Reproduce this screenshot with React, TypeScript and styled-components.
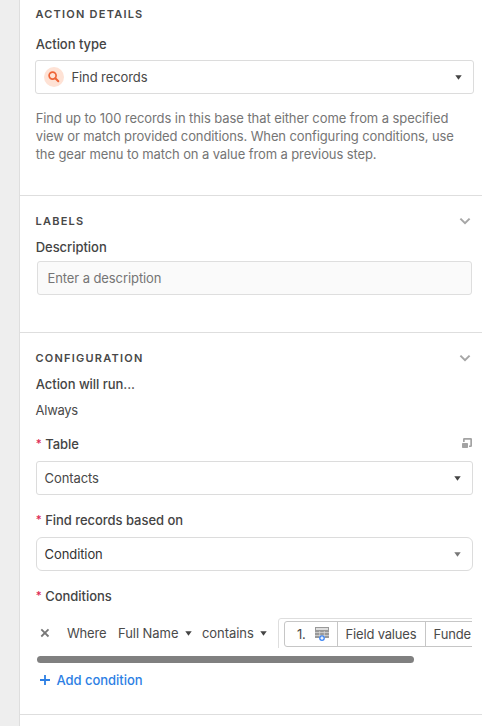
import React from "react";
import styled, { createGlobalStyle } from "styled-components";

const GlobalStyle = createGlobalStyle`
  *, *::before, *::after { box-sizing: border-box; }
  html, body { margin: 0; padding: 0; background: #fff; overflow: hidden; }
  body, input, button {
    font-family: Inter, "Liberation Sans", sans-serif;
    font-size: 13px;
    color: #4a4a4a;
  }
`;

const Page = styled.div`
  display: flex;
  width: 482px;
  height: 726px;
  overflow: hidden;
`;

const Gutter = styled.div`
  flex: none;
  width: 20px;
  background: #eee;
  border-right: 1px solid #dedede;
`;

const Panel = styled.main`
  flex: 1;
  min-width: 0;
  background: #fff;
`;

const Section = styled.section<{ $height: number; $top: number }>`
  height: ${(p) => p.$height}px;
  padding: ${(p) => p.$top}px 8px 0 16px;
  border-bottom: 1px solid #dedede;
`;

const SectionHead = styled.header`
  display: flex;
  align-items: center;
  justify-content: space-between;
  height: 16px;
  padding-right: 3px;
`;

const Title = styled.h2`
  margin: 0 0 0 -0.5px;
  font-size: 11px;
  line-height: 16px;
  font-weight: 600;
  letter-spacing: 1.22px;
  text-transform: uppercase;
  color: #484848;
`;

const LabelRow = styled.div<{ $mt: number }>`
  display: flex;
  align-items: center;
  justify-content: space-between;
  height: 18px;
  margin-top: ${(p) => p.$mt}px;
  padding-right: 2px;
`;

const Label = styled.span`
  display: flex;
  margin-left: -0.3px;
  font-weight: 500;
  line-height: 18px;
  letter-spacing: -0.04px;
  color: #444;
`;

const Required = styled.span`
  width: 9.5px;
  font-size: 11.5px;
  color: #dc2450;
`;

const SelectBox = styled.button<{ $mt: number; $wide?: boolean; $round?: boolean }>`
  display: flex;
  align-items: center;
  width: ${(p) => (p.$wide ? 439 : 437)}px;
  height: 34px;
  margin: ${(p) => p.$mt}px 0 0 ${(p) => (p.$wide ? -1 : 0)}px;
  padding: 0 11px 0 ${(p) => (p.$wide ? 8 : 7.6)}px;
  border: 1px solid #dcdcdc;
  border-radius: ${(p) => (p.$round ? 6 : 3)}px;
  background: #fff;
  text-align: left;
  line-height: 18px;
`;

const SelectValue = styled.span<{ $dark?: boolean }>`
  flex: 1;
  letter-spacing: -0.1px;
  color: ${(p) => (p.$dark ? "#333" : "#484848")};
`;

const IconBadge = styled.span`
  display: flex;
  align-items: center;
  justify-content: center;
  width: 20px;
  height: 20px;
  margin-right: 7.5px;
  border-radius: 50%;
  background: #fee2d5;
`;

const Help = styled.p`
  margin: 15px 0 0 -0.3px;
  line-height: 18px;
  color: #757575;
  white-space: nowrap;
`;

const Line = styled.span<{ $spacing: number }>`
  display: block;
  letter-spacing: ${(p) => p.$spacing}px;
`;

const DescriptionInput = styled.input`
  display: block;
  width: 435px;
  height: 34px;
  margin: 5px 0 0 1px;
  padding: 0 9.5px;
  border: 1px solid #dedede;
  border-radius: 3px;
  background: #fafafa;
  outline: none;
  &::placeholder { color: #757575; opacity: 1; letter-spacing: -0.09px; }
`;

const Value = styled.div`
  height: 18px;
  margin: 8px 0 0 -0.4px;
  line-height: 18px;
  letter-spacing: -0.3px;
`;

const Scroller = styled.div`
  display: flex;
  align-items: flex-start;
  width: 436px;
  height: 30px;
  margin-top: 13px;
  overflow: hidden;
  white-space: nowrap;
  line-height: 30px;
`;

const RemoveButton = styled.span`
  display: flex;
  align-items: center;
  flex: none;
  width: 31px;
  height: 30px;
  padding-left: 4px;
`;

const Word = styled.span<{ $width: number }>`
  flex: none;
  width: ${(p) => p.$width}px;
  letter-spacing: -0.2px;
`;

const Picker = styled.span<{ $width: number }>`
  display: flex;
  align-items: center;
  flex: none;
  width: ${(p) => p.$width}px;
  height: 30px;
  gap: 6.5px;
  letter-spacing: -0.06px;
`;

const ValueBox = styled.div`
  flex: none;
  width: 240px;
  height: 36px;
  padding: 2px 0 0 5px;
  border: 1px solid #dedede;
  border-radius: 3px;
`;

const Token = styled.div`
  display: flex;
  width: 260px;
  height: 26px;
  border: 1px solid #c6c6c6;
  border-radius: 3px;
  line-height: 25px;
  letter-spacing: -0.18px;
`;

const TokenPart = styled.span<{ $width: number; $pad: number }>`
  display: flex;
  align-items: center;
  flex: none;
  width: ${(p) => p.$width}px;
  padding-left: ${(p) => p.$pad}px;
  gap: 9px;
  & + & { border-left: 1px solid #c6c6c6; }
`;

const ScrollThumb = styled.div`
  width: 377px;
  height: 7px;
  margin: 8px 0 0 1px;
  border-radius: 4px;
  background: #808080;
`;

const AddButton = styled.button`
  display: flex;
  align-items: center;
  height: 18px;
  margin-top: 8px;
  padding: 0 0 0 4px;
  border: 0;
  background: none;
  gap: 6.5px;
  font-weight: 500;
  letter-spacing: -0.04px;
  line-height: 18px;
  color: #2d7fe4;
`;

const Caret = ({ color = "#444" }: { color?: string }) => (
  <svg width="7" height="5" viewBox="0 0 7 5">
    <path d="M.3.3h6.4L3.5 4.8z" fill={color} />
  </svg>
);

const Chevron = () => (
  <svg width="12" height="8" viewBox="0 0 12 8" fill="none">
    <path d="M1.4 1.6 6 6.1l4.6-4.5" stroke="#a6a6a6" strokeWidth="2" />
  </svg>
);

const SearchIcon = () => (
  <svg width="12" height="12" viewBox="0 0 12 12" fill="none" stroke="#ee6538">
    <circle cx="4.6" cy="4.6" r="3.5" strokeWidth="1.7" />
    <path d="m7.3 7.3 3 3" strokeWidth="2" strokeLinecap="round" />
  </svg>
);

const ExpandIcon = () => (
  <svg width="10" height="12" viewBox="0 0 10 12">
    <path d="M1 4V1.2Q1 0 2.2 0h6.6Q10 0 10 1.2v6.6Q10 9 8.8 9H7V7.4h1.3V1.7H2.7V4z" fill="#a3a3a3" />
    <rect x="0" y="5" width="6" height="5" rx=".7" fill="#a3a3a3" />
  </svg>
);

const CloseIcon = () => (
  <svg width="10" height="10" viewBox="0 0 10 10">
    <path d="m1.3 1.3 7.2 7.2M8.5 1.3 1.3 8.5" stroke="#777" strokeWidth="1.8" />
  </svg>
);

const PlusIcon = () => (
  <svg width="10" height="10" viewBox="0 0 10 10">
    <path d="M5 0v10M0 5h10" stroke="#2d7fe4" strokeWidth="1.8" />
  </svg>
);

const TableIcon = () => (
  <svg width="14" height="14" viewBox="0 0 14 14">
    <path d="M0 0h14v11H0z" fill="#999" />
    <path d="M1 1h12v2H1z" fill="#dedede" />
    <path d="M0 5.5h14M0 8.5h14M4.7 4v7M9.3 4v7" stroke="#dcdcdc" strokeWidth=".7" />
    <circle cx="7" cy="11.1" r="2.9" fill="#3d86f5" />
    <path d="M7 9.5v3.2M5.4 11.1h3.2" stroke="#fff" strokeWidth="1.3" />
  </svg>
);

const RequiredLabel = ({ text }: { text: string }) => (
  <Label>
    <Required>*</Required>
    {text}
  </Label>
);

export default function App() {
  return (
    <>
      <GlobalStyle />
      <Page>
        <Gutter />
        <Panel>
          <Section $height={196} $top={6}>
            <SectionHead>
              <Title>Action details</Title>
            </SectionHead>
            <LabelRow $mt={13}>
              <Label>Action type</Label>
            </LabelRow>
            <SelectBox $mt={7} $wide>
              <IconBadge>
                <SearchIcon />
              </IconBadge>
              <SelectValue>Find records</SelectValue>
              <Caret />
            </SelectBox>
            <Help>
              <Line $spacing={-0.08}>Find up to 100 records in this base that either come from a specified</Line>
              <Line $spacing={-0.115}>view or match provided conditions. When configuring conditions, use</Line>
              <Line $spacing={-0.105}>the gear menu to match on a value from a previous step.</Line>
            </Help>
          </Section>

          <Section $height={137} $top={17}>
            <SectionHead>
              <Title>Labels</Title>
              <Chevron />
            </SectionHead>
            <LabelRow $mt={9}>
              <Label>Description</Label>
            </LabelRow>
            <DescriptionInput placeholder="Enter a description" />
          </Section>

          <Section $height={382} $top={17}>
            <SectionHead>
              <Title>Configuration</Title>
              <Chevron />
            </SectionHead>
            <LabelRow $mt={9}>
              <Label>Action will run...</Label>
            </LabelRow>
            <Value>Always</Value>
            <LabelRow $mt={16}>
              <RequiredLabel text="Table" />
              <ExpandIcon />
            </LabelRow>
            <SelectBox $mt={8}>
              <SelectValue>Contacts</SelectValue>
              <Caret />
            </SelectBox>
            <LabelRow $mt={16}>
              <RequiredLabel text="Find records based on" />
            </LabelRow>
            <SelectBox $mt={8} $round>
              <SelectValue $dark>Condition</SelectValue>
              <Caret color="#777" />
            </SelectBox>
            <LabelRow $mt={16}>
              <RequiredLabel text="Conditions" />
            </LabelRow>
            <Scroller>
              <RemoveButton>
                <CloseIcon />
              </RemoveButton>
              <Word $width={51}>Where</Word>
              <Picker $width={84}>
                Full Name
                <Caret />
              </Picker>
              <Picker $width={76}>
                contains
                <Caret />
              </Picker>
              <ValueBox>
                <Token>
                  <TokenPart $width={52} $pad={12}>
                    1.
                    <TableIcon />
                  </TokenPart>
                  <TokenPart $width={88} $pad={7.6}>Field values</TokenPart>
                  <TokenPart $width={118} $pad={7.6}>Funde</TokenPart>
                </Token>
              </ValueBox>
            </Scroller>
            <ScrollThumb />
            <AddButton>
              <PlusIcon />
              Add condition
            </AddButton>
          </Section>
        </Panel>
      </Page>
    </>
  );
}
